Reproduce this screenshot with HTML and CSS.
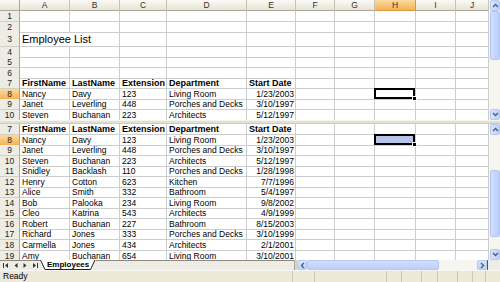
FILE: index.html
```html
<!DOCTYPE html>
<html>
<head>
<meta charset="utf-8">
<link rel="stylesheet" href="styles.css">
</head>
<body>
<div class="app">
  <div class="pane pane-top">
    <div class="sheet">
      <div class="r hd"><div></div><div>A</div><div>B</div><div>C</div><div>D</div><div>E</div><div>F</div><div>G</div><div class="on">H</div><div>I</div><div>J</div></div>
      <div class="r"><div>1</div><div></div><div></div><div></div><div></div><div></div><div></div><div></div><div></div><div></div><div></div></div>
      <div class="r"><div>2</div><div></div><div></div><div></div><div></div><div></div><div></div><div></div><div></div><div></div><div></div></div>
      <div class="r t"><div>3</div><div class="title">Employee List</div><div></div><div></div><div></div><div></div><div></div><div></div><div></div><div></div></div>
      <div class="r"><div>4</div><div></div><div></div><div></div><div></div><div></div><div></div><div></div><div></div><div></div><div></div></div>
      <div class="r"><div>5</div><div></div><div></div><div></div><div></div><div></div><div></div><div></div><div></div><div></div><div></div></div>
      <div class="r"><div>6</div><div></div><div></div><div></div><div></div><div></div><div></div><div></div><div></div><div></div><div></div></div>
      <div class="r b"><div>7</div><div>FirstName</div><div>LastName</div><div>Extension</div><div>Department</div><div>Start Date</div><div></div><div></div><div></div><div></div><div></div></div>
      <div class="r"><div class="on">8</div><div>Nancy</div><div>Davy</div><div>123</div><div>Living Room</div><div class="d">1/23/2003</div><div></div><div></div><div class="sel"></div><div></div><div></div></div>
      <div class="r"><div>9</div><div>Janet</div><div>Leverling</div><div>448</div><div>Porches and Decks</div><div class="d">3/10/1997</div><div></div><div></div><div></div><div></div><div></div></div>
      <div class="r"><div>10</div><div>Steven</div><div>Buchanan</div><div>223</div><div>Architects</div><div class="d">5/12/1997</div><div></div><div></div><div></div><div></div><div></div></div>
    </div>
    <div class="vscroll">
      <div class="sbtn"><svg width="7" height="5" viewBox="0 0 7 5"><path d="M1 4 3.5 1.5 6 4" fill="none" stroke="#4d6185" stroke-width="1.4"/></svg></div>
      <div class="thumb thumb-top"></div>
      <div class="track"></div>
      <div class="sbtn"><svg width="7" height="5" viewBox="0 0 7 5"><path d="M1 1 3.5 3.5 6 1" fill="none" stroke="#4d6185" stroke-width="1.4"/></svg></div>
    </div>
  </div>
  <div class="split"></div>
  <div class="pane pane-bottom">
    <div class="sheet">
      <div class="r b"><div>7</div><div>FirstName</div><div>LastName</div><div>Extension</div><div>Department</div><div>Start Date</div><div></div><div></div><div></div><div></div><div></div></div>
      <div class="r"><div class="on">8</div><div>Nancy</div><div>Davy</div><div>123</div><div>Living Room</div><div class="d">1/23/2003</div><div></div><div></div><div class="sel fill"></div><div></div><div></div></div>
      <div class="r"><div>9</div><div>Janet</div><div>Leverling</div><div>448</div><div>Porches and Decks</div><div class="d">3/10/1997</div><div></div><div></div><div></div><div></div><div></div></div>
      <div class="r"><div>10</div><div>Steven</div><div>Buchanan</div><div>223</div><div>Architects</div><div class="d">5/12/1997</div><div></div><div></div><div></div><div></div><div></div></div>
      <div class="r"><div>11</div><div>Snidley</div><div>Backlash</div><div>110</div><div>Porches and Decks</div><div class="d">1/28/1998</div><div></div><div></div><div></div><div></div><div></div></div>
      <div class="r"><div>12</div><div>Henry</div><div>Cotton</div><div>623</div><div>Kitchen</div><div class="d">7/7/1996</div><div></div><div></div><div></div><div></div><div></div></div>
      <div class="r"><div>13</div><div>Alice</div><div>Smith</div><div>332</div><div>Bathroom</div><div class="d">5/4/1997</div><div></div><div></div><div></div><div></div><div></div></div>
      <div class="r"><div>14</div><div>Bob</div><div>Palooka</div><div>234</div><div>Living Room</div><div class="d">9/8/2002</div><div></div><div></div><div></div><div></div><div></div></div>
      <div class="r"><div>15</div><div>Cleo</div><div>Katrina</div><div>543</div><div>Architects</div><div class="d">4/9/1999</div><div></div><div></div><div></div><div></div><div></div></div>
      <div class="r"><div>16</div><div>Robert</div><div>Buchanan</div><div>227</div><div>Bathroom</div><div class="d">8/15/2003</div><div></div><div></div><div></div><div></div><div></div></div>
      <div class="r"><div>17</div><div>Richard</div><div>Jones</div><div>333</div><div>Porches and Decks</div><div class="d">3/10/1999</div><div></div><div></div><div></div><div></div><div></div></div>
      <div class="r"><div>18</div><div>Carmella</div><div>Jones</div><div>434</div><div>Architects</div><div class="d">2/1/2001</div><div></div><div></div><div></div><div></div><div></div></div>
      <div class="r"><div>19</div><div>Amy</div><div>Buchanan</div><div>654</div><div>Living Room</div><div class="d">3/10/2001</div><div></div><div></div><div></div><div></div><div></div></div>
    </div>
    <div class="vscroll">
      <div class="sbtn"><svg width="7" height="5" viewBox="0 0 7 5"><path d="M1 4 3.5 1.5 6 4" fill="none" stroke="#4d6185" stroke-width="1.4"/></svg></div>
      <div class="track track-fixed"></div>
      <div class="thumb thumb-bottom"></div>
      <div class="track"></div>
      <div class="sbtn"><svg width="7" height="5" viewBox="0 0 7 5"><path d="M1 1 3.5 3.5 6 1" fill="none" stroke="#4d6185" stroke-width="1.4"/></svg></div>
    </div>
  </div>
  <div class="tabbar">
    <div class="nav">
      <svg width="6" height="5" viewBox="0 0 6 5"><path d="M0.5 0V5" stroke="#333"/><path d="M5 0 2 2.5 5 5Z" fill="#333"/></svg>
      <svg width="4" height="5" viewBox="0 0 4 5"><path d="M3.5 0 0.5 2.5 3.5 5Z" fill="#333"/></svg>
      <svg width="4" height="5" viewBox="0 0 4 5"><path d="M0.5 0 3.5 2.5 0.5 5Z" fill="#333"/></svg>
      <svg width="6" height="5" viewBox="0 0 6 5"><path d="M1 0 4 2.5 1 5Z" fill="#333"/><path d="M5.5 0V5" stroke="#333"/></svg>
    </div>
    <div class="tab">
      <svg class="tab-shape" width="56" height="10" viewBox="0 0 56 10"><path d="M0.5 0 5 9.5H50.5L55 0" fill="#fff" stroke="#222"/></svg>
      <span class="tab-label">Employees</span>
    </div>
    <div class="tab-space"></div>
    <div class="hsplit"></div>
    <div class="hscroll">
      <div class="hbtn"><svg width="5" height="7" viewBox="0 0 5 7"><path d="M4 1 1.5 3.5 4 6" fill="none" stroke="#4d6185" stroke-width="1.4"/></svg></div>
      <div class="hthumb"></div>
      <div class="htrack"></div>
      <div class="hbtn"><svg width="5" height="7" viewBox="0 0 5 7"><path d="M1 1 3.5 3.5 1 6" fill="none" stroke="#4d6185" stroke-width="1.4"/></svg></div>
    </div>
    <div class="corner"></div>
  </div>
  <div class="status">
    <div class="panel main">Ready</div>
    <div class="panel w22"></div>
    <div class="panel w72"></div>
    <div class="panel w15"></div>
    <div class="panel w20"></div>
    <div class="panel w16"></div>
    <div class="panel w20"></div>
    <div class="panel w15"></div>
    <div class="panel w13"></div>
    <div class="grip"></div>
  </div>
</div>
</body>
</html>
```

FILE: styles.css
```css
html, body {
  margin: 0;
  padding: 0;
  background: #fff;
}
body {
  width: 500px;
  height: 282px;
  overflow: hidden;
  font-family: "Liberation Sans", Arial, sans-serif;
  color: #000;
}
.app {
  display: flex;
  flex-direction: column;
  width: 500px;
  height: 282px;
}
.pane {
  display: flex;
}
.pane-top {
  height: 120px;
}
.pane-bottom {
  height: 136px;
}
.sheet {
  flex: 1;
  overflow: hidden;
  background: #fff;
}
.split {
  height: 4px;
  box-sizing: border-box;
  background: #e3e1d3;
  border-top: 1px solid #f4f3ec;
  border-bottom: 1px solid #cfccbd;
}

/* rows and cells */
.r {
  display: grid;
  grid-template-columns: 20px 50px 50px 47px 80px 49px 39px 40px 41px 40px 33px;
  height: 10.55px;
}
.r > div {
  box-sizing: border-box;
  border-right: 1px solid #cdcdcd;
  border-bottom: 1px solid #cdcdcd;
  padding: 0 0 0 2px;
  font-size: 8.5px;
  line-height: 10px;
  white-space: nowrap;
}
.r > div:first-child {
  padding: 0;
  text-align: center;
  background: #eeede5;
  border-right-color: #aca899;
  border-bottom-color: #d2d0c2;
  color: #222;
  font-size: 8.5px;
}
.r.t {
  height: 14.6px;
}
.r.t > div:first-child {
  line-height: 14px;
}
.title {
  grid-column: span 2;
  font-size: 11px !important;
  line-height: 14px !important;
}
.r.b > div {
  font-weight: bold;
  font-size: 9px;
}
.r.b > div:first-child {
  font-weight: normal;
  font-size: 8.5px;
}
.r > div.d {
  text-align: right;
  padding: 0 1px 0 0;
}

/* column header */
.r.hd {
  height: 11px;
}
.r.hd > div {
  padding: 0;
  text-align: center;
  background: linear-gradient(#fbfaf5, #e6e4d6);
  border-right-color: #c7c4b4;
  border-bottom-color: #aca899;
  color: #333;
  font-size: 8.5px;
  line-height: 10px;
}
.r.hd > div:first-child {
  background: linear-gradient(#fbfaf5, #e6e4d6);
  border-right-color: #aca899;
}
.r > div.on,
.r.hd > div.on {
  background: linear-gradient(#fbd99e, #f4b457);
  border-right-color: #d79a3c;
  border-bottom-color: #d79a3c;
}

/* selection */
.sel {
  position: relative;
}
.sel::after {
  content: "";
  position: absolute;
  left: -1px;
  top: -1px;
  right: 0;
  bottom: 0;
  border: 2px solid #000;
}
.sel::before {
  content: "";
  position: absolute;
  right: -2px;
  bottom: -2px;
  width: 3px;
  height: 3px;
  background: #000;
  border: 1px solid #fff;
  z-index: 2;
}
.sel.fill {
  background: #b6c5e7;
}

/* vertical scrollbar */
.vscroll {
  width: 11px;
  display: flex;
  flex-direction: column;
  background: #f6f5f0;
}
.sbtn {
  height: 11px;
  flex: none;
  box-sizing: border-box;
  margin: 0 0 0 1px;
  border: 1px solid #b6c9f3;
  border-radius: 2px;
  background: linear-gradient(90deg, #d9e4fd, #bcd0fa);
  display: flex;
  align-items: center;
  justify-content: center;
}
.thumb {
  flex: none;
  box-sizing: border-box;
  margin-left: 1px;
  border: 1px solid #b3c7f4;
  border-radius: 2px;
  background: linear-gradient(90deg, #d2defd, #bccffa);
}
.thumb-top {
  height: 49px;
}
.thumb-bottom {
  height: 67px;
}
.track {
  flex: 1;
}
.track-fixed {
  flex: none;
  height: 35px;
}

/* tab bar */
.tabbar {
  height: 10px;
  display: flex;
  background: #eeede5;
  box-sizing: border-box;
}
.nav {
  width: 40px;
  flex: none;
  display: flex;
  align-items: center;
  gap: 5px;
  padding-left: 3px;
  box-sizing: border-box;
  border-top: 1px solid #8c8a80;
}
.tab {
  position: relative;
  width: 56px;
  height: 10px;
  flex: none;
}
.tab-shape {
  position: absolute;
  left: 0;
  top: 0;
}
.tab-label {
  position: relative;
  display: block;
  padding-left: 7px;
  font-size: 8px;
  font-weight: bold;
  line-height: 10px;
}
.tab-space {
  flex: 1;
  border-top: 1px solid #8c8a80;
}
.hsplit {
  width: 2px;
  flex: none;
  background: #d8d5c6;
  border-left: 1px solid #aca899;
}
.hscroll {
  width: 190px;
  flex: none;
  display: flex;
  background: #f6f5f0;
}
.hbtn {
  width: 10px;
  flex: none;
  box-sizing: border-box;
  border: 1px solid #b6c9f3;
  border-radius: 2px;
  background: linear-gradient(#d9e4fd, #bcd0fa);
  display: flex;
  align-items: center;
  justify-content: center;
}
.hthumb {
  width: 132px;
  flex: none;
  box-sizing: border-box;
  border: 1px solid #b3c7f4;
  border-radius: 2px;
  background: linear-gradient(#d2defd, #bccffa);
}
.htrack {
  flex: 1;
}
.corner {
  width: 13px;
  flex: none;
  box-sizing: border-box;
  background: #eeede5;
  border-left: 1px solid #55554c;
}

/* status bar */
.status {
  height: 12px;
  display: flex;
  background: #ece9d8;
  border-top: 1px solid #f8f7f2;
  box-sizing: border-box;
}
.panel {
  box-sizing: border-box;
  height: 100%;
  border-right: 1px solid #cbc8b6;
  font-size: 8.5px;
  line-height: 11px;
}
.panel.main {
  width: 293px;
  padding-left: 3px;
}
.w22 { width: 22px; }
.w72 { width: 72px; }
.w15 { width: 15px; }
.w20 { width: 20px; }
.w16 { width: 16px; }
.w13 { width: 13px; }
.grip {
  flex: 1;
}
```
